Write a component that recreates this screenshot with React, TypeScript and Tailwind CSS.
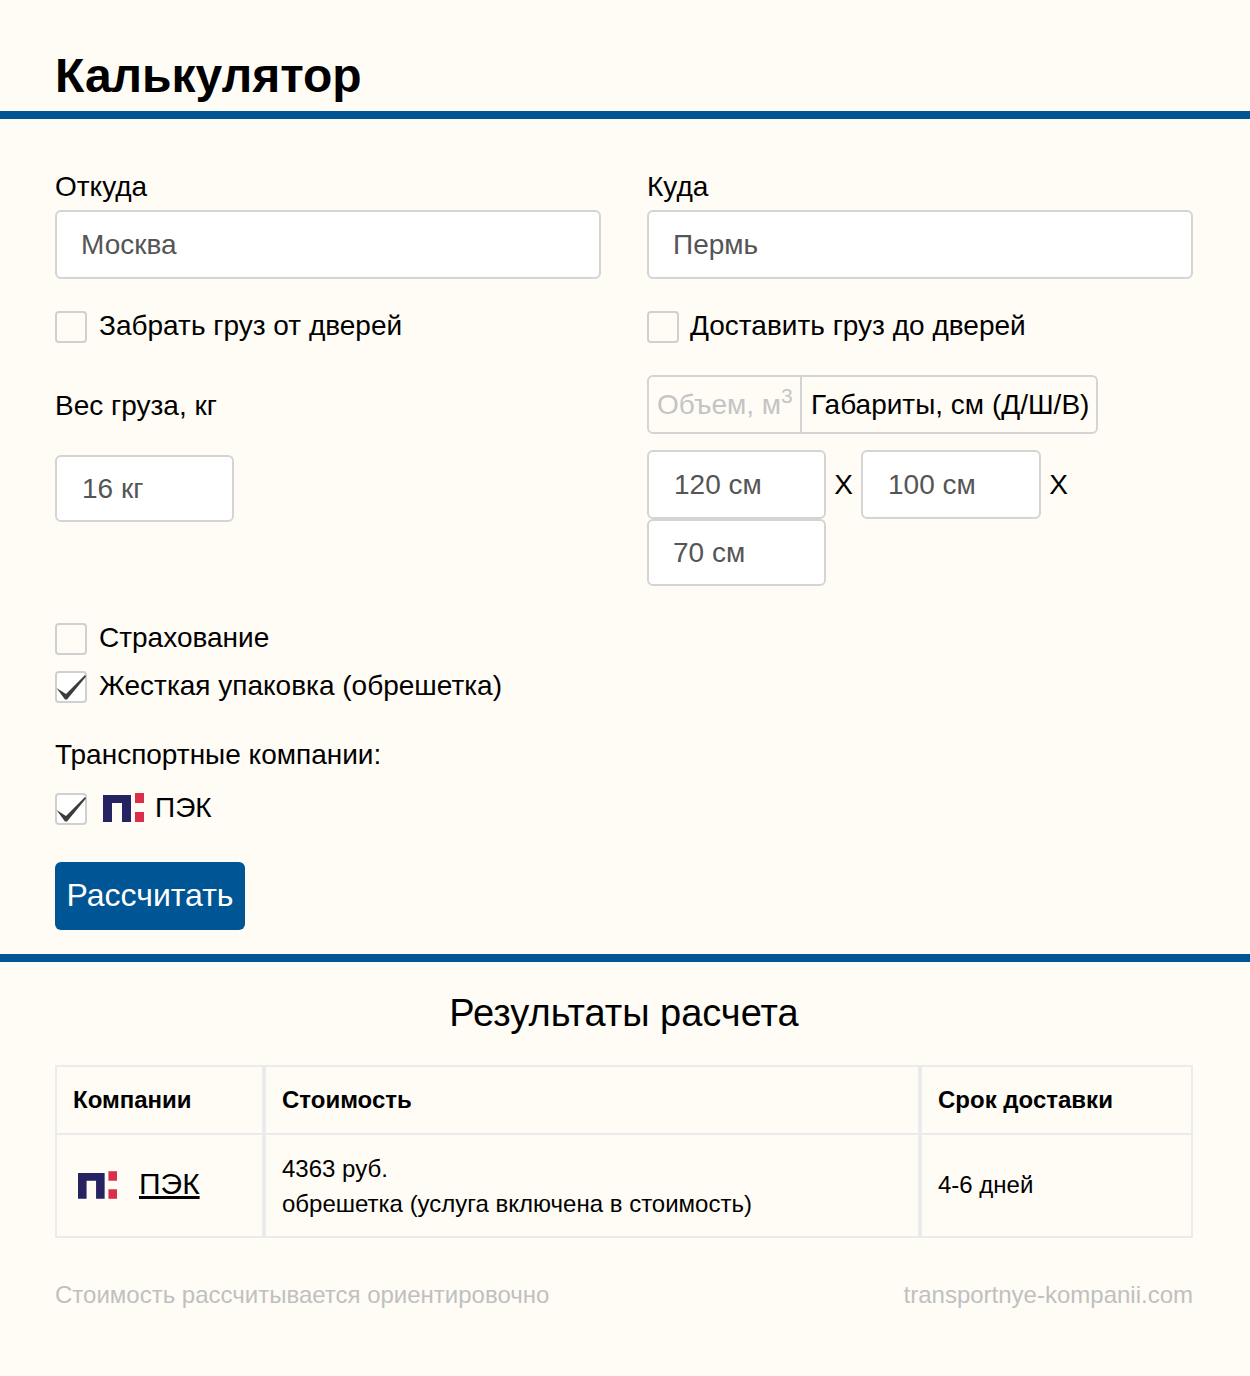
const font = "font-['Liberation_Sans',Arial,sans-serif]";

function PekLogo({ small = false }: { small?: boolean }) {
  return (
    <svg width={small ? 39 : 41} height={small ? 28 : 29} viewBox="0 0 41 29" className="shrink-0 block">
      <path d="M0 2h28v27h-9V10H9v19H0z" fill="#252361" />
      <rect x="32" y="0" width="9" height="10" fill="#d92f4b" />
      <rect x="32" y="19" width="9" height="10" fill="#d92f4b" />
    </svg>
  );
}

function Check({ checked = false }: { checked?: boolean }) {
  return (
    <span className={`relative block w-8 h-8 shrink-0 rounded border-2 border-[#d0d0d0] ${checked ? "bg-white" : "bg-[#fffcf5]"}`}>
      {checked && (
        <svg width="32" height="32" viewBox="0 0 32 32" className="absolute -left-0.5 -top-0.5">
          <path d="M1.5 17L11 23L30 4L31 5.5L12 28.5H10z" fill="#3c3c3c" />
        </svg>
      )}
    </span>
  );
}

function Field({ value, className }: { value: string; className: string }) {
  return (
    <input
      readOnly
      value={value}
      className={`block bg-white border-2 border-[#d4d4d4] rounded-md text-[#555] text-[28px] outline-none ${className}`}
    />
  );
}

export default function App() {
  return (
    <div className={`${font} bg-[#fffcf5] min-h-[1376px] text-black text-[28px] leading-8`}>
      <h1 className="pl-[55px] pt-[49px] pb-[8px] text-[48px] leading-[54px] font-bold border-b-8 border-[#005594]">Калькулятор</h1>

      <div className="pl-[55px] pr-[58px] pt-[52px]">
        <div className="grid grid-cols-[546px_546px] gap-x-[46px]">
          <div>
            <div className="h-[39px]">Откуда</div>
            <Field value="Москва" className="w-full h-[69px] px-6" />
            <label className="flex items-center gap-3 mt-[32px]">
              <Check />
              <span className="-mt-0.5">Забрать груз от дверей</span>
            </label>
            <div className="mt-[47px] h-8">Вес груза, кг</div>
            <Field value="16 кг" className="w-[179px] h-[67px] px-[25px] mt-[33px]" />
          </div>
          <div>
            <div className="h-[39px]">Куда</div>
            <Field value="Пермь" className="w-full h-[69px] px-6" />
            <label className="flex items-center gap-[11px] mt-[32px]">
              <Check />
              <span className="-mt-0.5">Доставить груз до дверей</span>
            </label>
            <div className="mt-[32px] flex w-[451px] h-[59px] border-2 border-[#d4d4d4] rounded-md items-center">
              <div className="w-[153px] h-full border-r-2 border-[#d4d4d4] pl-2 text-[#c4c4c4] leading-[56px] whitespace-nowrap">
                Объем, м<sup className="text-[21px] leading-none align-[1px]">3</sup>
              </div>
              <div className="pl-[9px] whitespace-nowrap">Габариты, см (Д/Ш/В)</div>
            </div>
            <div className="flex items-center mt-[16px]">
              <Field value="120 см" className="w-[179px] h-[69px] px-[25px]" />
              <span className="w-[35px] text-center">Х</span>
              <Field value="100 см" className="w-[180px] h-[69px] px-[25px]" />
              <span className="w-[35px] text-center">Х</span>
            </div>
            <Field value="70 см" className="w-[179px] h-[67px] px-6" />
          </div>
        </div>

        <label className="flex items-center gap-3 mt-[37px]">
          <Check />
          <span className="-mt-0.5">Страхование</span>
        </label>
        <label className="flex items-center gap-3 mt-4">
          <Check checked />
          <span className="-mt-0.5">Жесткая упаковка (обрешетка)</span>
        </label>
        <div className="mt-[36px] h-8">Транспортные компании:</div>
        <label className="flex items-start mt-[22px]">
          <Check checked />
          <span className="ml-[16px] mr-[11px]"><PekLogo /></span>
          <span className="-mt-px">ПЭК</span>
        </label>
        <button className="block mt-[37px] w-[190px] h-[68px] pb-[2px] bg-[#005594] rounded-md text-white text-[32px] text-center">Рассчитать</button>
      </div>

      <div className="mt-[24px] border-t-8 border-[#005594] pl-[55px] pr-[57px]">
        <h2 className="text-center text-[38px] leading-[44px] mt-[29px]">Результаты расчета</h2>
        <table className="mt-[30px] w-[1138px] border-collapse text-[24px] leading-[35px] table-fixed">
          <thead>
            <tr className="h-[68px]">
              <th className="w-[208px] border-2 border-[#ebebeb] border-r-4 pl-[16px] pb-px text-left font-bold">Компании</th>
              <th className="border-2 border-[#ebebeb] border-r-4 pl-[16px] pb-px text-left font-bold">Стоимость</th>
              <th className="w-[272px] border-2 border-[#ebebeb] pl-[16px] pb-px text-left font-bold">Срок доставки</th>
            </tr>
          </thead>
          <tbody>
            <tr className="h-[103px]">
              <td className="border-2 border-[#ebebeb] border-r-4 pl-[21px] pb-[2px]">
                <div className="flex items-center gap-[22px]">
                  <PekLogo small />
                  <a href="#" className="underline text-[30px] leading-9 -mt-0.5">ПЭК</a>
                </div>
              </td>
              <td className="border-2 border-[#ebebeb] border-r-4 pl-[16px]">
                4363 руб.<br />обрешетка (услуга включена в стоимость)
              </td>
              <td className="border-2 border-[#ebebeb] pl-[16px] pb-[2px]">4-6 дней</td>
            </tr>
          </tbody>
        </table>
        <div className="flex justify-between mt-[41px] text-[24px] leading-8 text-[#c0c0c0]">
          <span>Стоимость рассчитывается ориентировочно</span>
          <span>transportnye-kompanii.com</span>
        </div>
      </div>
    </div>
  );
}
